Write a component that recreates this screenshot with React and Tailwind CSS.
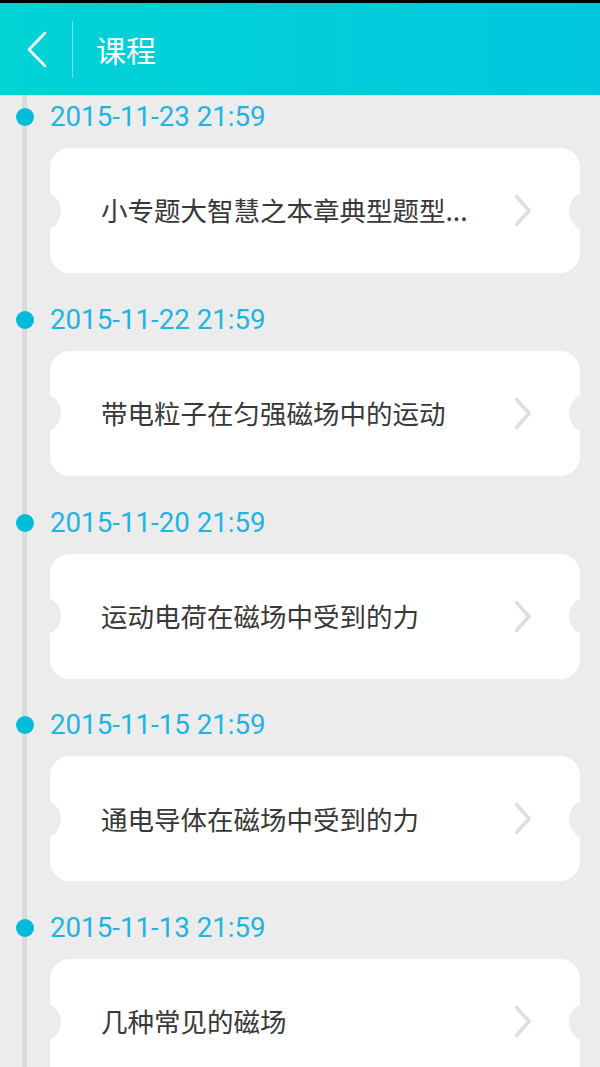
import React from 'react';

const courses = [
  { date: '2015-11-23 21:59', title: '小专题大智慧之本章典型题型...' },
  { date: '2015-11-22 21:59', title: '带电粒子在匀强磁场中的运动' },
  { date: '2015-11-20 21:59', title: '运动电荷在磁场中受到的力' },
  { date: '2015-11-15 21:59', title: '通电导体在磁场中受到的力' },
  { date: '2015-11-13 21:59', title: '几种常见的磁场' }
];

const BackIcon = () => (
  <svg width="22" height="37" viewBox="0 0 22 37" fill="none">
    <path d="M19 2 L3 18.5 L19 35" stroke="white" strokeWidth="2.6" strokeLinecap="round" strokeLinejoin="round" />
  </svg>
);

const Chevron = () => (
  <svg width="18" height="33" viewBox="0 0 18 33" fill="none">
    <path d="M2.5 2.5 L15 16.5 L2.5 30.5" stroke="#dedede" strokeWidth="3.5" strokeLinecap="round" strokeLinejoin="round" />
  </svg>
);

const CourseCard = ({ title }) => (
  <div className="relative ml-[50px] mr-[20px] h-[125px] bg-white rounded-[20px] overflow-hidden flex items-center">
    <div className="absolute left-[-29px] top-1/2 -translate-y-1/2 w-[40px] h-[40px] rounded-full bg-[#ececec]" />
    <div className="absolute right-[-29px] top-1/2 -translate-y-1/2 w-[40px] h-[40px] rounded-full bg-[#ececec]" />
    <p className="flex-1 pl-[51px] text-[26.5px] leading-none text-[#383838] whitespace-nowrap" style={{ fontFamily: '"Noto Sans CJK SC", "Noto Sans", sans-serif' }}>
      {title}
    </p>
    <div className="mr-[48px] flex items-center">
      <Chevron />
    </div>
  </div>
);

export default function App() {
  return (
    <div className="w-[600px] h-[1067px] overflow-hidden bg-[#ececec]">
      <div className="h-[3px] bg-black" />
      <header className="h-[92px] flex items-center bg-gradient-to-r from-[#02d3d5] to-[#00c7de]">
        <div className="pl-[26px] w-[72px] flex items-center">
          <BackIcon />
        </div>
        <div className="w-px h-[57px] bg-white/40" />
        <h1 className="ml-[23px] text-[30px] leading-none text-white" style={{ fontFamily: '"Noto Sans CJK SC", sans-serif' }}>
          课程
        </h1>
      </header>

      <div className="relative pt-[6px]">
        <div className="absolute left-[22px] top-0 bottom-0 w-[5px] bg-[#dadada]" />
        {courses.map((c) => (
          <div key={c.date} className="relative mb-[30.75px]">
            <div className="h-8 flex items-center pl-[16px]">
              <span className="w-[18px] h-[18px] rounded-full bg-[#00bcd8]" />
              <span className="ml-[16px] text-[27.7px] leading-none text-[#21b3e3]" style={{ fontFamily: 'Roboto, sans-serif' }}>
                {c.date}
              </span>
            </div>
            <div className="mt-[15px]">
              <CourseCard title={c.title} />
            </div>
          </div>
        ))}
      </div>
    </div>
  );
}
